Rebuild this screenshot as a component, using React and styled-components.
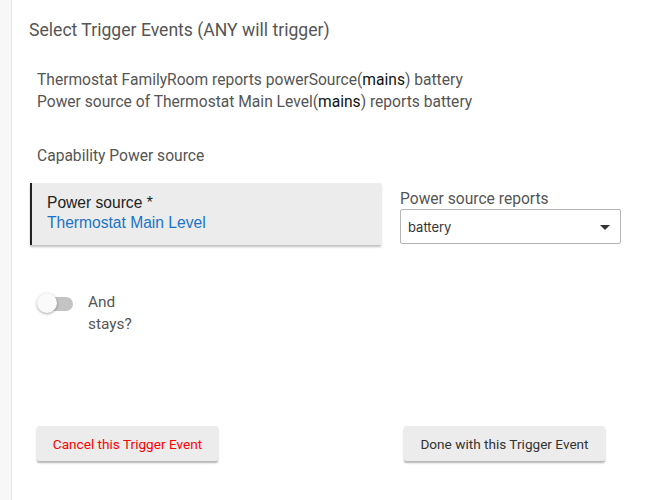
import React from 'react';
import styled, { createGlobalStyle } from 'styled-components';

const GlobalStyle = createGlobalStyle`
  html, body {
    margin: 0;
    padding: 0;
    background: #ffffff;
  }
  body {
    font-family: Roboto, "Noto Sans", sans-serif;
  }
`;

export default function App() {
  return (
    <>
      <GlobalStyle />
      <Page>
        <SideStrip />
        <Content>
          <Title>Select Trigger Events (ANY will trigger)</Title>
          <Description>
            <Line>Thermostat FamilyRoom reports powerSource(<Strong>mains</Strong>) battery</Line>
            <Line>Power source of Thermostat Main Level(<Strong>mains</Strong>) reports battery</Line>
          </Description>
          <Capability>Capability Power source</Capability>
          <FieldRow>
            <DeviceCard>
              <CardLabel>Power source *</CardLabel>
              <CardValue>Thermostat Main Level</CardValue>
            </DeviceCard>
            <SelectGroup>
              <SelectLabel>Power source reports</SelectLabel>
              <SelectBox>
                <span>battery</span>
                <Caret viewBox="0 0 10 5" width="10" height="5">
                  <path d="M0 0 L10 0 L5 5 Z" fill="#333" />
                </Caret>
              </SelectBox>
            </SelectGroup>
          </FieldRow>
          <ToggleRow>
            <Switch>
              <Track />
              <Thumb />
            </Switch>
            <ToggleText>
              <div>And</div>
              <div>stays?</div>
            </ToggleText>
          </ToggleRow>
          <ButtonRow>
            <ActionButton $color="#ff0000" $width={181}>Cancel this Trigger Event</ActionButton>
            <ActionButton $color="#333333" $width={201}>Done with this Trigger Event</ActionButton>
          </ButtonRow>
        </Content>
      </Page>
    </>
  );
}

const Page = styled.div`
  display: flex;
  min-height: 500px;
`;

const SideStrip = styled.div`
  width: 11px;
  flex-shrink: 0;
  background: #f7f7f7;
  border-right: 1px solid #e6e6e6;
`;

const Content = styled.div`
  flex: 1;
  padding: 20px 0 0 17px;
  display: flex;
  flex-direction: column;
`;

const Title = styled.div`
  font-size: 17.6px;
  line-height: 20px;
  color: #555555;
`;

const Description = styled.div`
  margin: 29px 0 0 8px;
  font-size: 15.6px;
  line-height: 22px;
  color: #555555;
`;

const Line = styled.div``;

const Strong = styled.span`
  color: #111111;
`;

const Capability = styled.div`
  margin: 33px 0 0 8px;
  font-size: 15.6px;
  line-height: 20px;
  color: #555555;
`;

const FieldRow = styled.div`
  display: flex;
  align-items: flex-start;
  margin: 17px 0 0 1px;
  gap: 19px;
`;

const DeviceCard = styled.div`
  width: 351px;
  height: 62px;
  box-sizing: border-box;
  padding: 10px 0 0 15px;
  background: #ececec;
  border-left: 2px solid #222222;
  box-shadow: 0 2px 2px rgba(0, 0, 0, 0.25);
  font-family: "Liberation Sans", Arial, sans-serif;
  font-size: 15.6px;
  line-height: 20px;
`;

const CardLabel = styled.div`
  color: #222222;
`;

const CardValue = styled.div`
  color: #1a73c8;
`;

const SelectGroup = styled.div`
  display: flex;
  flex-direction: column;
  padding-top: 6px;
`;

const SelectLabel = styled.div`
  font-size: 15.6px;
  line-height: 20px;
  color: #555555;
`;

const SelectBox = styled.div`
  width: 221px;
  height: 35px;
  box-sizing: border-box;
  border: 1px solid #b5b5b5;
  border-radius: 2px;
  display: flex;
  align-items: center;
  justify-content: space-between;
  padding: 0 10px 0 7px;
  font-family: Inter, Roboto, sans-serif;
  font-size: 13px;
  color: #333333;
`;

const Caret = styled.svg`
  display: block;
  margin-top: 1px;
`;

const ToggleRow = styled.div`
  display: flex;
  align-items: flex-start;
  margin: 46px 0 0 8px;
`;

const Switch = styled.div`
  position: relative;
  width: 36px;
  height: 22px;
  margin-top: 1px;
`;

const Track = styled.div`
  position: absolute;
  left: 8px;
  top: 5px;
  width: 28px;
  height: 14px;
  border-radius: 7px;
  background: #c4c4c4;
`;

const Thumb = styled.div`
  position: absolute;
  left: 0;
  top: 1px;
  width: 20px;
  height: 20px;
  border-radius: 50%;
  background: #fafafa;
  box-shadow: 0 1px 3px rgba(0, 0, 0, 0.35);
`;

const ToggleText = styled.div`
  margin-left: 15px;
  font-size: 15.4px;
  line-height: 22px;
  color: #555555;
`;

const ButtonRow = styled.div`
  display: flex;
  margin: 91px 0 0 8px;
  gap: 186px;
`;

const ActionButton = styled.button`
  width: ${props => props.$width}px;
  height: 35px;
  border: none;
  border-radius: 2px;
  background: #ececec;
  box-shadow: 0 2px 2px rgba(0, 0, 0, 0.3);
  font-family: Roboto, sans-serif;
  font-size: 13.6px;
  color: ${props => props.$color};
  padding: 0;
  cursor: pointer;
`;
